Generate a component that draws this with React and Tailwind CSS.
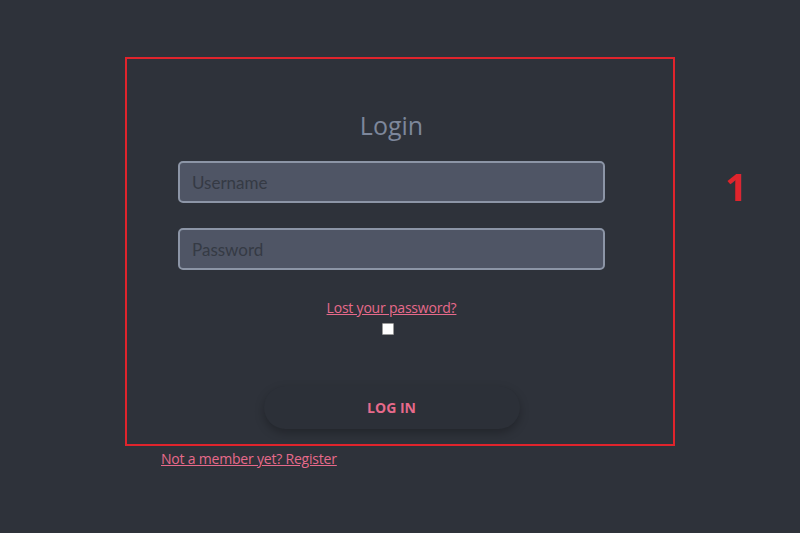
export default function App() {
  return (
    <div className="min-h-[533px] w-[800px] bg-[#2e323a] relative" style={{ fontFamily: "'Open Sans', 'Noto Sans', sans-serif" }}>
      <div className="pt-[57px] pl-[125px]">
        <div className="w-[550px] h-[389px] border-2 border-[#e0242c] pr-[17px] flex flex-col items-center">
          <h2 className="mt-[50px] text-[25px] leading-[32px] text-[#7d879b]">Login</h2>
          <input
            type="text"
            placeholder="Username"
            className="mt-[20px] w-[427px] h-[42px] px-3 bg-[#4f5565] border-2 border-[#8c95a6] rounded-[5px] text-[17px] placeholder-[#353a44] outline-none"
            style={{ fontFamily: "Lato, sans-serif" }}
          />
          <input
            type="password"
            placeholder="Password"
            className="mt-[25px] w-[427px] h-[42px] px-3 bg-[#4f5565] border-2 border-[#8c95a6] rounded-[5px] text-[17px] placeholder-[#353a44] outline-none"
            style={{ fontFamily: "Lato, sans-serif" }}
          />
          <a href="#" className="mt-[28px] text-[14px] tracking-[-0.2px] leading-[20px] text-[#e76a8b] underline">
            Lost your password?
          </a>
          <input type="checkbox" className="mt-[5px] mr-[8px] w-[12px] h-[12px] appearance-none bg-white border border-[#999] rounded-[1px]" />
          <button className="mt-[51px] w-[256px] h-[43px] rounded-full bg-[#2c3038] shadow-[0_4px_10px_rgba(0,0,0,0.25)] text-[14px] font-bold text-[#e76a8b]">
            LOG IN
          </button>
        </div>
      </div>
      <a href="#" className="absolute left-[161px] top-[449px] text-[14px] tracking-[-0.2px] leading-[20px] text-[#e76a8b] underline">
        Not a member yet? Register
      </a>
      <div className="absolute left-[725px] top-[164px] text-[38px] font-bold leading-[44px] text-[#e0242c]">1</div>
    </div>
  );
}
